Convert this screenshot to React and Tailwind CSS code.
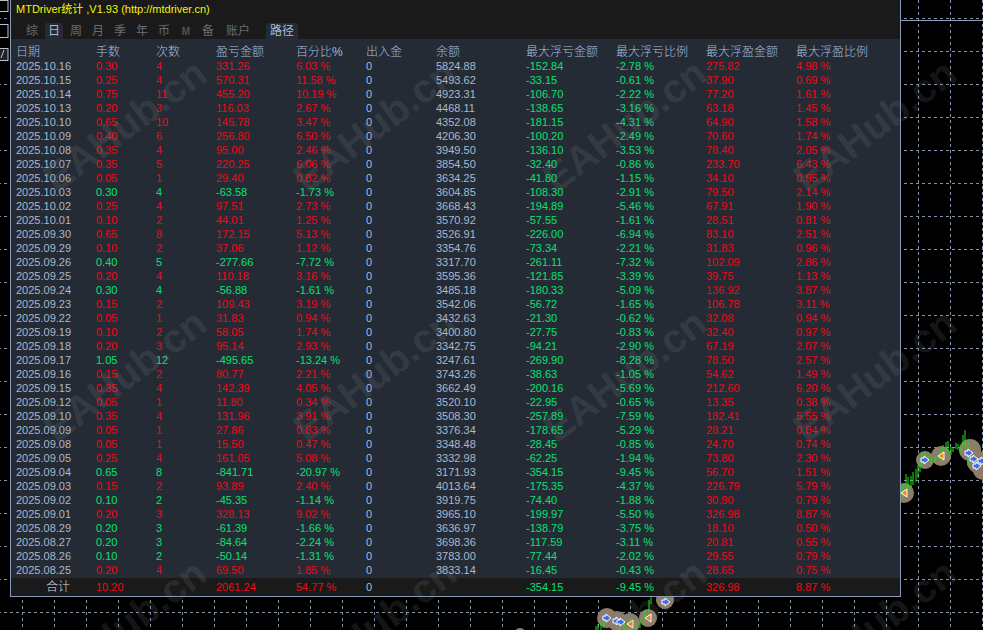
const raw = `2025.10.16 0.30 4 331.26 6.03 5824.88 -152.84 -2.78 275.82 4.98
2025.10.15 0.25 4 570.31 11.58 5493.62 -33.15 -0.61 37.90 0.69
2025.10.14 0.75 11 455.20 10.19 4923.31 -106.70 -2.22 77.20 1.61
2025.10.13 0.20 3 116.03 2.67 4468.11 -138.65 -3.16 63.18 1.45
2025.10.10 0.65 10 145.78 3.47 4352.08 -181.15 -4.31 64.90 1.58
2025.10.09 0.40 6 256.80 6.50 4206.30 -100.20 -2.49 70.60 1.74
2025.10.08 0.35 4 95.00 2.46 3949.50 -136.10 -3.53 78.40 2.05
2025.10.07 0.35 5 220.25 6.06 3854.50 -32.40 -0.86 233.70 6.43
2025.10.06 0.05 1 29.40 0.82 3634.25 -41.80 -1.15 34.10 0.95
2025.10.03 0.30 4 -63.58 -1.73 3604.85 -108.30 -2.91 79.50 2.14
2025.10.02 0.25 4 97.51 2.73 3668.43 -194.89 -5.46 67.91 1.90
2025.10.01 0.10 2 44.01 1.25 3570.92 -57.55 -1.61 28.51 0.81
2025.09.30 0.65 8 172.15 5.13 3526.91 -226.00 -6.94 83.10 2.51
2025.09.29 0.10 2 37.06 1.12 3354.76 -73.34 -2.21 31.83 0.96
2025.09.26 0.40 5 -277.66 -7.72 3317.70 -261.11 -7.32 102.09 2.86
2025.09.25 0.20 4 110.18 3.16 3595.36 -121.85 -3.39 39.75 1.13
2025.09.24 0.30 4 -56.88 -1.61 3485.18 -180.33 -5.09 136.92 3.87
2025.09.23 0.15 2 109.43 3.19 3542.06 -56.72 -1.65 106.78 3.11
2025.09.22 0.05 1 31.83 0.94 3432.63 -21.30 -0.62 32.08 0.94
2025.09.19 0.10 2 58.05 1.74 3400.80 -27.75 -0.83 32.40 0.97
2025.09.18 0.20 3 95.14 2.93 3342.75 -94.21 -2.90 67.19 2.07
2025.09.17 1.05 12 -495.65 -13.24 3247.61 -269.90 -8.28 78.50 2.57
2025.09.16 0.15 2 80.77 2.21 3743.26 -38.63 -1.05 54.62 1.49
2025.09.15 0.35 4 142.39 4.05 3662.49 -200.16 -5.69 212.60 6.20
2025.09.12 0.05 1 11.80 0.34 3520.10 -22.95 -0.65 13.35 0.38
2025.09.10 0.35 4 131.96 3.91 3508.30 -257.89 -7.59 182.41 5.55
2025.09.09 0.05 1 27.86 0.83 3376.34 -178.65 -5.29 28.21 0.84
2025.09.08 0.05 1 15.50 0.47 3348.48 -28.45 -0.85 24.70 0.74
2025.09.05 0.25 4 161.05 5.08 3332.98 -62.25 -1.94 73.80 2.30
2025.09.04 0.65 8 -841.71 -20.97 3171.93 -354.15 -9.45 56.70 1.51
2025.09.03 0.15 2 93.89 2.40 4013.64 -175.35 -4.37 226.79 5.79
2025.09.02 0.10 2 -45.35 -1.14 3919.75 -74.40 -1.88 30.90 0.79
2025.09.01 0.20 3 328.13 9.02 3965.10 -199.97 -5.50 326.98 8.87
2025.08.29 0.20 3 -61.39 -1.66 3636.97 -138.79 -3.75 18.10 0.50
2025.08.27 0.20 3 -84.64 -2.24 3698.36 -117.59 -3.11 20.81 0.55
2025.08.26 0.10 2 -50.14 -1.31 3783.00 -77.44 -2.02 29.55 0.79
2025.08.25 0.20 4 69.50 1.85 3833.14 -16.45 -0.43 28.65 0.75`;

const rows = raw.split("\n").map((l) => l.split(" "));
const headers = ["日期", "手数", "次数", "盈亏金额", "百分比%", "出入金", "余额", "最大浮亏金额", "最大浮亏比例", "最大浮盈金额", "最大浮盈比例"];
const GRID = "grid grid-cols-[80px_60px_60px_80px_70px_70px_90px_90px_90px_90px_90px] pl-[5px]";
const RED = "text-[#ee0a16]";
const GREEN = "text-[#08e070]";

function Row({ r }) {
  const tone = r[3].startsWith("-") ? GREEN : RED;
  return (
    <div className={`${GRID} h-[14px] leading-[14px]`}>
      <span className="text-[#aab8cc]">{r[0]}</span>
      <span className={tone}>{r[1]}</span>
      <span className={tone}>{r[2]}</span>
      <span className={tone}>{r[3]}</span>
      <span className={tone}>{r[4]} %</span>
      <span className="text-[#a3bde0]">0</span>
      <span className="text-[#aab8cc]">{r[5]}</span>
      <span className={GREEN}>{r[6]}</span>
      <span className={GREEN}>{r[7]} %</span>
      <span className={RED}>{r[8]}</span>
      <span className={RED}>{r[9]} %</span>
    </div>
  );
}

function Arrow({ x, y, left }) {
  const pts = left
    ? `${x + 3},${y - 4} ${x + 3},${y + 4} ${x - 3},${y}`
    : `${x - 4},${y - 2} ${x - 1},${y - 2} ${x - 1},${y - 4} ${x + 4},${y} ${x - 1},${y + 4} ${x - 1},${y + 2} ${x - 4},${y + 2}`;
  return <polygon points={pts} fill={left ? "#e8900c" : "#3f6fe8"} stroke="#ffffff" strokeWidth="1" />;
}

function Chart() {
  const vs = [];
  for (let x = 22; x < 983; x += 32) vs.push(x);
  const hs = [];
  for (let y = 18; y < 630; y += 33) hs.push(y);
  const bars = [
    [903, 484, 498], [906, 474, 490], [908, 477, 490], [911, 476, 488], [913, 472, 485], [916, 469, 482], [918, 465, 478], [920, 460, 472], [922, 452, 466], [925, 451, 462],
    [928, 456, 460], [931, 458, 464], [935, 456, 463], [938, 455, 459], [941, 449, 462], [943, 445, 458], [946, 442, 454], [948, 441, 451], [951, 447, 455], [953, 447, 452],
    [956, 443, 449], [958, 444, 450], [961, 446, 453], [963, 435, 446], [965, 430, 448], [968, 440, 466],
    [596, 626, 630], [598, 624, 630], [601, 622, 630], [604, 620, 628], [620, 622, 630], [624, 620, 630], [630, 618, 630], [636, 622, 630], [640, 620, 628], [645, 610, 622], [649, 600, 612], [651, 596, 604],
  ];
  const circles = [
    [904, 493, 10], [925, 460, 9], [941, 456, 10], [970, 450, 11], [978, 462, 11], [983, 470, 10],
    [607, 618, 10], [617, 621, 10], [630, 623, 10], [648, 618, 9], [665, 600, 9], [520, 634, 6],
  ];
  return (
    <svg className="absolute inset-0" width="983" height="630" viewBox="0 0 983 630">
      {vs.map((x) => (
        <line key={x} x1={x + 0.5} y1="0" x2={x + 0.5} y2="630" stroke="#8794a8" strokeDasharray="3 3" />
      ))}
      {hs.map((y) => (
        <line key={y} x1="0" y1={y + 0.5} x2="983" y2={y + 0.5} stroke="#8794a8" strokeDasharray="3 3" strokeDashoffset="-4" />
      ))}
      <line x1="900" y1="20.5" x2="983" y2="20.5" stroke="#8fa0b8" />
      {circles.map(([x, y, r], i) => (
        <circle key={i} cx={x} cy={y} r={r} fill="#8c7d6b" />
      ))}
      {bars.map(([x, a, b], i) => (
        <line key={i} x1={x} y1={a} x2={x} y2={b} stroke="#19e60f" strokeWidth="1" />
      ))}
      <Arrow x={904} y={493} left />
      <Arrow x={925} y={460} />
      <Arrow x={941} y={456} left />
      <Arrow x={969} y={453} />
      <Arrow x={974} y={459} />
      <Arrow x={977} y={466} />
      <Arrow x={982} y={461} />
      <Arrow x={607} y={618} />
      <Arrow x={617} y={621} />
      <Arrow x={621} y={622} />
      <Arrow x={630} y={624} left />
      <Arrow x={648} y={618} left />
      <Arrow x={666} y={602} />
      <rect x="-6" y="0.5" width="14" height="11" fill="#000" stroke="#b8c2d0" />
      <rect x="-6" y="24.5" width="14" height="13" fill="#000" stroke="#b8c2d0" />
      <rect x="-6" y="48.5" width="14" height="12" fill="#222" stroke="#b8c2d0" />
      <line x1="4" y1="50" x2="1" y2="58" stroke="#b8c2d0" />
    </svg>
  );
}

function Tab({ children, active, w = "w-[22px]", extra = "" }) {
  return (
    <div className={`${w} ${extra} flex justify-center`}>
      <span className={active ? "px-[2.5px] h-[16px] leading-[16px] bg-[#242b35] text-[#a9bbd5] rounded-t-[2px]" : "h-[16px] leading-[16px]"}>{children}</span>
    </div>
  );
}

export default function App() {
  return (
    <div className="relative w-[983px] h-[630px] bg-black overflow-hidden font-['Liberation_Sans','Noto_Sans_CJK_SC',sans-serif] text-[11px]">
      <Chart />
      <div className="relative ml-[10px] w-[891px] h-[597px] border-x border-b border-[#8a9bb5] bg-[#1a1a1a] flex flex-col">
        <div className="h-[23px] pl-[5px] pt-[3px] leading-[13px] text-[11px] text-[#f5f500]">MTDriver统计 ,V1.93 (http://mtdriver.cn)</div>
        <div className="h-[16px] flex pl-[10px] text-[12px] text-[#696e75]">
          <Tab>综</Tab>
          <Tab active>日</Tab>
          <Tab>周</Tab>
          <Tab>月</Tab>
          <Tab>季</Tab>
          <Tab>年</Tab>
          <Tab>币</Tab>
          <Tab><span className="text-[10px] font-bold text-[#5c4f48]">M</span></Tab>
          <Tab>备</Tab>
          <Tab w="w-[38px]">账户</Tab>
          <div className="ml-[9px] w-[32px] h-[16px] leading-[16px] text-center bg-[#242b35] text-[#a9bbd5] rounded-t-[2px]">路径</div>
        </div>
        <div className="bg-[#242b35] pt-[6px] h-[539px]">
          <div className={`${GRID} h-[14px] leading-[14px] text-[12px] font-light text-[#a9bbd5]`}>
            {headers.map((h) => (
              <span key={h} className="whitespace-nowrap">{h}</span>
            ))}
          </div>
          {rows.map((r) => (
            <Row key={r[0]} r={r} />
          ))}
        </div>
        <div className={`${GRID} flex-1 items-center bg-[#1a1a1a]`}>
          <span className="pl-[30px] text-[12px] font-light text-[#d5dbe3]">合计</span>
          <span className={RED}>10.20</span>
          <span />
          <span className={RED}>2061.24</span>
          <span className={RED}>54.77 %</span>
          <span className="text-[#a3bde0]">0</span>
          <span />
          <span className={GREEN}>-354.15</span>
          <span className={GREEN}>-9.45 %</span>
          <span className={RED}>326.98</span>
          <span className={RED}>8.87 %</span>
        </div>
      </div>
      <div className="absolute inset-0 grid grid-cols-[repeat(4,250px)] grid-rows-[repeat(3,250px)] pointer-events-none">
        {Array.from({ length: 12 }).map((_, i) => (
          <div key={i} className="flex items-center justify-center">
            <span className="-rotate-[37deg] whitespace-nowrap font-['Liberation_Sans',sans-serif] font-bold text-[40px] text-[#8c8c8c]/18">EAHub.cn</span>
          </div>
        ))}
      </div>
    </div>
  );
}
